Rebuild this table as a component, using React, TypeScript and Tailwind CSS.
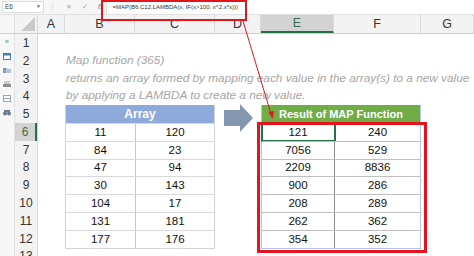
import React from "react";

const font = { fontFamily: '"Liberation Sans", Arial, sans-serif' };

const cols = [
  { name: "A", w: "w-[27px]" },
  { name: "B", w: "w-[70px]" },
  { name: "C", w: "w-[80px]" },
  { name: "D", w: "w-[46px]" },
  { name: "E", w: "w-[73px]" },
  { name: "F", w: "w-[87px]" },
  { name: "G", w: "w-[53px]" },
];

const arrayData = [
  [11, 120],
  [84, 23],
  [47, 94],
  [30, 143],
  [104, 17],
  [131, 181],
  [177, 176],
];

const resultData = [
  [121, 240],
  [7056, 529],
  [2209, 8836],
  [900, 286],
  [208, 289],
  [262, 362],
  [354, 352],
];

function SideIcons() {
  return (
    <div className="w-[15px] shrink-0 flex flex-col items-center bg-[#f7f7f7] border-r border-[#e2e2e2] pt-[4px] gap-[7px]">
      <span className="text-[7px] leading-[8px] text-[#777]">»</span>
      <svg width="8" height="7" viewBox="0 0 8 7">
        <rect x="0.5" y="0.5" width="7" height="6" fill="#fff" stroke="#4a7ab8" />
        <rect x="0.5" y="0.5" width="7" height="2" fill="#4a7ab8" />
      </svg>
      <svg width="8" height="7" viewBox="0 0 8 7">
        <rect x="0" y="1" width="4" height="5" fill="#8a9bb0" />
        <rect x="3" y="2" width="5" height="4" fill="#b8c4d2" />
      </svg>
      <svg width="8" height="7" viewBox="0 0 8 7">
        <rect x="1" y="0" width="6" height="3" fill="#c9c9c9" />
        <rect x="0" y="3" width="8" height="3" fill="#8d8d8d" />
      </svg>
      <svg width="8" height="7" viewBox="0 0 8 7">
        <rect x="0.5" y="0.5" width="7" height="6" fill="#fff" stroke="#9aa7b8" />
        <line x1="0.5" y1="3.5" x2="7.5" y2="3.5" stroke="#9aa7b8" />
      </svg>
      <svg width="8" height="7" viewBox="0 0 8 7">
        <circle cx="2" cy="4.5" r="2" fill="#6b7a8c" />
        <circle cx="6" cy="4.5" r="2" fill="#6b7a8c" />
        <rect x="1" y="1" width="6" height="2" fill="#6b7a8c" />
      </svg>
    </div>
  );
}

export default function App() {
  return (
    <div className="relative w-[474px] h-[256px] overflow-hidden bg-white" style={font}>
      {/* formula bar */}
      <div className="flex h-[15px] items-center bg-[#f6f6f6] border-b border-[#e1e1e1] text-[6.5px] text-[#444]">
        <div className="ml-[2px] w-[42px] shrink-0 h-[12px] bg-white border border-[#dcdcdc] flex items-center justify-between px-[2px]">
          <span>E6</span>
          <span className="text-[5px] text-[#666]">▼</span>
        </div>
        <span className="ml-[5px] text-[#bbb]">⋮</span>
        <span className="ml-[10px] text-[#aaa] text-[7px]">✕</span>
        <span className="ml-[10px] text-[#aaa] text-[7px]">✓</span>
        <span className="ml-[10px] text-[#777] italic text-[7px]">fx</span>
        <div className="ml-[3px] flex-1 h-[14px] bg-white border-l border-[#dcdcdc] flex items-center pl-[5px] text-[6px] text-[#333]">
          =MAP(B6:C12,LAMBDA(x, IF(x&gt;100, x^2,x*x)))
        </div>
      </div>

      {/* column headers */}
      <div className="flex h-[19px] bg-[#f3f3f3] border-b border-[#cfcfcf]">
        <div className="w-[15px] shrink-0 bg-[#f7f7f7] border-r border-[#e2e2e2]" />
        <div className="w-[23px] shrink-0 flex items-end justify-end pr-[2px] pb-[2px] border-r border-[#d8d8d8]">
          <svg width="14" height="14" viewBox="0 0 14 14">
            <polygon points="14,0 14,14 0,14" fill="#c9c9c9" />
          </svg>
        </div>
        {cols.map((c) => (
          <div
            key={c.name}
            className={`${c.w} shrink-0 flex items-center justify-center text-[12.5px] border-r border-[#dadada] ${
              c.name === "E" ? "bg-[#d3d3d3] text-[#3d6b4f] border-b-2 border-b-[#217346]" : "text-[#333]"
            }`}
          >
            {c.name}
          </div>
        ))}
      </div>

      {/* body */}
      <div className="flex">
        <SideIcons />
        <div className="w-[23px] shrink-0 flex flex-col bg-[#f3f3f3] border-r border-[#d8d8d8]">
          {Array.from({ length: 13 }, (_, i) => i + 1).map((n) => (
            <div
              key={n}
              className={`h-[17.8px] flex items-center justify-center text-[12px] ${
                n === 6 ? "bg-[#d3d3d3] text-[#3d6b4f] border-r-2 border-[#217346]" : "text-[#333]"
              }`}
            >
              {n}
            </div>
          ))}
        </div>

        <div className="flex-1 min-w-0 flex flex-col">
          <div className="h-[17.8px]" />
          <div className="pl-[28px] italic text-[#a6a6a6] text-[11.8px] whitespace-nowrap">
            <div className="h-[17.8px] flex items-center">Map function (365)</div>
            <div className="h-[17.8px] flex items-center">
              returns an array formed by mapping each value in the array(s) to a new value
            </div>
            <div className="h-[17.8px] flex items-center">by applying a LAMBDA to create a new value.</div>
          </div>

          <div className="flex pl-[27px]">
            {/* Array table */}
            <div className="w-[150px] shrink-0 flex flex-col border-x border-b border-[#d4d4d4]">
              <div className="h-[17.8px] bg-[#8eaadb] text-white font-bold text-[12px] flex items-center justify-center">
                Array
              </div>
              {arrayData.map((r, i) => (
                <div key={i} className="h-[17.8px] flex border-t border-[#d9d9d9] text-[11.5px] text-[#111]">
                  <div className="w-[70px] flex items-center justify-center border-r border-[#c8c8c8]">{r[0]}</div>
                  <div className="flex-1 flex items-center justify-center">{r[1]}</div>
                </div>
              ))}
            </div>

            {/* Result table */}
            <div className="ml-[46px] w-[160px] shrink-0 flex flex-col border-x border-b border-[#b4c6e7]">
              <div className="h-[17.8px] bg-[#70ad47] text-white font-bold text-[11px] flex items-center justify-center">
                Result of MAP Function
              </div>
              {resultData.map((r, i) => (
                <div key={i} className="h-[17.8px] flex border-t border-[#bfbfbf] text-[11.5px] text-[#111]">
                  <div
                    className={`w-[73px] flex items-center justify-center border-r border-[#8c8c8c] ${
                      i === 0 ? "outline-2 outline-[#217346] -outline-offset-1" : ""
                    }`}
                  >
                    {r[0]}
                  </div>
                  <div className="flex-1 flex items-center justify-center">{r[1]}</div>
                </div>
              ))}
            </div>
          </div>
        </div>
      </div>

      {/* red highlight boxes */}
      <div className="absolute left-[101px] top-0 w-[146px] h-[21px] border-2 border-[#e5141c]" />
      <div className="absolute left-[257px] top-[122px] w-[170px] h-[131px] border-[3px] border-[#e5141c]" />

      {/* arrows */}
      <svg className="absolute inset-0 pointer-events-none" width="474" height="256" viewBox="0 0 474 256">
        <polygon points="224,110 240,110 240,104 253,118 240,132 240,126 224,126" fill="#8497b0" />
        <line x1="243" y1="21" x2="271" y2="114" stroke="#e5141c" strokeWidth="1" />
        <polygon points="272.5,119 268.5,112 274,111" fill="#e5141c" />
      </svg>
    </div>
  );
}
